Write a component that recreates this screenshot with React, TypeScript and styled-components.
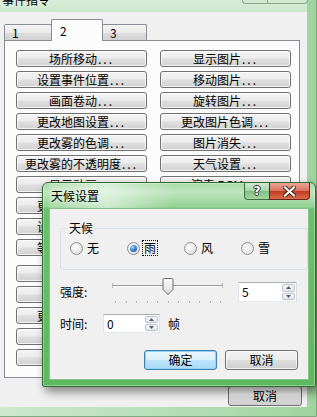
import React from "react";
import styled, { createGlobalStyle } from "styled-components";

const GlobalStyle = createGlobalStyle`
  html, body {
    margin: 0;
    padding: 0;
    overflow: hidden;
    background: #f0f0f0;
  }
  body {
    font-family: "Noto Sans CJK SC", "Liberation Sans", sans-serif;
    font-size: 12px;
    color: #000;
  }
  * {
    box-sizing: border-box;
  }
`;

const Page = styled.div`
  position: relative;
  width: 317px;
  height: 417px;
  overflow: hidden;
`;

/* ---------- background window (事件指令) ---------- */

const MainWindow = styled.div`
  display: flex;
  flex-direction: column;
  width: 325px;
  height: 431px;
  margin: -14px 0 0 -8px;
  padding: 0 9px 9px 7px;
  border: 1px solid #7fa97f;
  border-radius: 6px 6px 0 0;
  background: linear-gradient(90deg, #cde9cd, #b0dbb0 70%, #9fd39f);
`;

const TitleBar = styled.div<{ $active?: boolean }>`
  display: flex;
  align-items: flex-start;
  height: 25px;
  flex-shrink: 0;
  background: ${({ $active }) =>
    $active
      ? "linear-gradient(90deg, rgba(255,255,255,0.15) 0%, rgba(255,255,255,0.55) 22%, rgba(255,255,255,0) 48%)"
      : "linear-gradient(180deg, #e4f3e4, #d6ecd6 60%, #cbe7cb)"};
`;

const TitleText = styled.span<{ $indent: number }>`
  margin-top: 5px;
  padding-left: ${({ $indent }) => $indent}px;
  line-height: 16px;
  white-space: nowrap;
  text-shadow: 0 0 6px rgba(255, 255, 255, 0.9);
`;

const CaptionGroup = styled.div<{ $right: number }>`
  display: flex;
  margin-left: auto;
  margin-right: ${({ $right }) => $right}px;
`;

const CaptionButton = styled.div<{ $kind: "help" | "close"; $active?: boolean }>`
  display: flex;
  align-items: center;
  justify-content: center;
  width: ${({ $kind }) => ($kind === "help" ? 25 : 41)}px;
  height: 17px;
  border: 1px solid
    ${({ $kind, $active }) =>
      !$active ? "#8aa98a" : $kind === "help" ? "#3f6f3f" : "#6b2418"};
  border-top: none;
  ${({ $kind }) => ($kind === "help" ? "border-right: none;" : "")}
  border-radius: ${({ $kind }) => ($kind === "help" ? "0 0 0 4px" : "0 0 4px 0")};
  background: ${({ $kind, $active }) =>
    !$active
      ? "linear-gradient(180deg, #eef7ee, #d6ebd6 50%, #c4e2c4 51%, #d4ebd4)"
      : $kind === "help"
        ? "linear-gradient(180deg, #cfe9cf, #a6d3a6 50%, #80bf80 51%, #a3d6a3)"
        : "linear-gradient(180deg, #eaa596, #d9705a 50%, #c33a22 51%, #d96c4c)"};
  color: #fff;
  font-family: "DejaVu Sans", sans-serif;
  font-weight: bold;
  font-size: 12px;
  line-height: 14px;
  text-shadow:
    1px 0 0 #2c2c2c,
    -1px 0 0 #2c2c2c,
    0 1px 0 #2c2c2c,
    0 -1px 0 #2c2c2c;
`;

const Client = styled.div`
  flex: 1;
  display: flex;
  flex-direction: column;
  background: #f0f0f0;
  padding: 7px 0 0 4px;
`;

const TabStrip = styled.div`
  position: relative;
  z-index: 1;
  display: flex;
  align-items: flex-end;
  height: 21px;
`;

const Tab = styled.div<{ $active?: boolean; $width: number; $first?: boolean }>`
  position: relative;
  z-index: ${({ $active }) => ($active ? 2 : 1)};
  width: ${({ $width }) => $width}px;
  height: ${({ $active }) => ($active ? 22 : 16)}px;
  margin-left: ${({ $first }) => ($first ? 0 : -1)}px;
  margin-bottom: ${({ $active }) => ($active ? -1 : 0)}px;
  padding: ${({ $active }) => ($active ? "3px 0 0 8px" : "0 0 0 7px")};
  border: 1px solid #898c95;
  border-bottom: none;
  border-radius: 2px 2px 0 0;
  line-height: 15px;
  background: ${({ $active }) =>
    $active
      ? "#fcfcfc"
      : "linear-gradient(180deg, #f3f3f3, #ebebeb 50%, #dddddd 51%, #d2d2d2)"};
`;

const TabPanel = styled.div`
  width: 296px;
  height: 338px;
  padding: 9px 0 0 11px;
  border: 1px solid #898c95;
  background: #fcfcfc;
`;

const ButtonGrid = styled.div<{ $offset: number }>`
  display: grid;
  grid-template-columns: 131px 131px;
  grid-auto-rows: 17px;
  column-gap: 13px;
  row-gap: 4px;
  margin-top: ${({ $offset }) => $offset}px;
`;

const CommandButton = styled.div`
  height: 17px;
  border: 1px solid #707070;
  border-radius: 3px;
  background: linear-gradient(180deg, #f4f4f4, #ececec 45%, #dedede 55%, #d2d2d2);
  box-shadow: inset 0 0 0 1px rgba(255, 255, 255, 0.75);
  line-height: 15px;
  text-align: center;
  white-space: nowrap;
  overflow: hidden;
`;

const Dots = styled.span`
  letter-spacing: 2px;
  margin-left: 1px;
`;

const FooterButton = styled.div`
  align-self: flex-end;
  width: 74px;
  height: 20px;
  margin: 8px 5px 0 0;
  border: 1px solid #707070;
  border-radius: 3px;
  background: linear-gradient(180deg, #f2f2f2, #ebebeb 50%, #dddddd 51%, #cfcfcf);
  line-height: 18px;
  text-align: center;
`;

/* ---------- dialog (天候设置) ---------- */

const Dialog = styled.div`
  position: absolute;
  left: 42px;
  top: 182px;
  width: 274px;
  height: 205px;
  display: flex;
  flex-direction: column;
  padding: 0 6px 6px;
  border: 1px solid #2f6b2f;
  border-radius: 6px 6px 2px 2px;
  background: linear-gradient(
    180deg,
    #a6d9a6 0px,
    #bfe5bf 9px,
    #93d093 24px,
    #6cc06c 26px,
    #5bb95b 100%
  );
  box-shadow:
    inset 0 0 0 1px rgba(255, 255, 255, 0.35),
    3px 5px 10px rgba(0, 0, 0, 0.45);
`;

const DialogClient = styled.div`
  flex: 1;
  display: flex;
  flex-direction: column;
  border: 1px solid #8bc28b;
  background: #f0f0f0;
`;

const GroupBox = styled.fieldset`
  width: 241px;
  height: 50px;
  margin: 11px 0 0 10px;
  padding: 4px 9px 0;
  border: 1px solid #d5dfe5;
  border-radius: 3px;
`;

const GroupLegend = styled.legend`
  margin-left: -3px;
  padding: 0 2px;
  line-height: 16px;
`;

const RadioRow = styled.div`
  display: flex;
`;

const RadioItem = styled.label`
  display: flex;
  align-items: center;
  gap: 3px;
  width: 57px;
  height: 16px;
  line-height: 14px;
`;

const RadioDot = styled.span<{ $checked?: boolean }>`
  position: relative;
  width: 13px;
  height: 13px;
  flex-shrink: 0;
  border: 1px solid #8e8f8f;
  border-radius: 50%;
  background: radial-gradient(circle at 40% 40%, #ffffff, #e6e6e6 60%, #cfcfcf);
  &::after {
    content: "";
    display: ${({ $checked }) => ($checked ? "block" : "none")};
    position: absolute;
    left: 2px;
    top: 2px;
    width: 7px;
    height: 7px;
    border-radius: 50%;
    background: radial-gradient(circle at 35% 30%, #b9dcfb, #3a87d6 45%, #0d4f9c);
  }
`;

const RadioLabel = styled.span<{ $focused?: boolean }>`
  padding: 0 1px;
  outline: ${({ $focused }) => ($focused ? "1px dotted #000" : "none")};
  outline-offset: 0;
`;

const FieldRow = styled.div<{ $top: number; $align: string }>`
  display: flex;
  align-items: ${({ $align }) => $align};
  margin: ${({ $top }) => $top}px 0 0 10px;
`;

const FieldLabel = styled.span<{ $width: number; $padTop?: number }>`
  width: ${({ $width }) => $width}px;
  padding-top: ${({ $padTop }) => $padTop ?? 0}px;
  line-height: 16px;
`;

const SliderBox = styled.div`
  width: 118px;
  height: 28px;
`;

const SpinBox = styled.div<{ $width: number; $height: number; $gap?: number; $top?: number }>`
  display: flex;
  width: ${({ $width }) => $width}px;
  height: ${({ $height }) => $height}px;
  margin-left: ${({ $gap }) => $gap ?? 0}px;
  margin-top: ${({ $top }) => $top ?? 0}px;
  border: 1px solid #abadb3;
  border-color: #abadb3 #dbdfe6 #e3e9ef #e2e3ea;
  background: #fff;
`;

const SpinValue = styled.span`
  flex: 1;
  padding-left: 3px;
  line-height: 17px;
`;

const SpinArrows = styled.div`
  display: flex;
  flex-direction: column;
  gap: 1px;
  width: 13px;
  margin: 1px 1px 1px 0;
`;

const SpinArrow = styled.div`
  flex: 1;
  display: flex;
  align-items: center;
  justify-content: center;
  border: 1px solid #b8c3cf;
  border-radius: 2px;
  background: linear-gradient(180deg, #f6f8fa, #e3e8ee);
`;

const UnitText = styled.span`
  margin-left: 8px;
  line-height: 16px;
`;

const DialogButtons = styled.div`
  display: flex;
  justify-content: flex-end;
  gap: 8px;
  margin-top: 17px;
  padding-right: 10px;
`;

const PushButton = styled.div<{ $default?: boolean }>`
  width: 73px;
  height: 20px;
  border: 1px solid ${({ $default }) => ($default ? "#3c7fb1" : "#707070")};
  border-radius: 3px;
  background: ${({ $default }) =>
    $default
      ? "linear-gradient(180deg, #eaf6fd, #d9f0fc 50%, #bee6fd 51%, #a7d9f5)"
      : "linear-gradient(180deg, #f2f2f2, #ebebeb 50%, #dddddd 51%, #cfcfcf)"};
  box-shadow: ${({ $default }) =>
    $default ? "inset 0 0 0 1px #8fd3f5" : "inset 0 0 0 1px rgba(255,255,255,0.7)"};
  line-height: 18px;
  text-align: center;
`;

/* ---------- drawings ---------- */

function Arrow({ up }: { up?: boolean }) {
  return (
    <svg width="5" height="3" viewBox="0 0 5 3">
      <polygon points={up ? "0,3 5,3 2.5,0" : "0,0 5,0 2.5,3"} fill="#4d5a6a" />
    </svg>
  );
}

function CloseGlyph() {
  return (
    <svg width="13" height="11" viewBox="0 0 13 11">
      <path
        d="M2 1.5 L11 9.5 M11 1.5 L2 9.5"
        stroke="#3a1a14"
        strokeWidth="4"
        strokeLinecap="square"
      />
      <path
        d="M2 1.5 L11 9.5 M11 1.5 L2 9.5"
        stroke="#fff"
        strokeWidth="2.2"
        strokeLinecap="square"
      />
    </svg>
  );
}

function TrackBar({ value, max }: { value: number; max: number }) {
  const left = 7;
  const right = 112;
  const thumbX = left + ((right - left) * value) / max;
  const ticks = Array.from({ length: max + 1 }, (_, i) => left + ((right - left) * i) / max);
  return (
    <svg width="118" height="28" viewBox="0 0 118 28">
      <defs>
        <linearGradient id="thumbFill" x1="0" x2="0" y1="0" y2="1">
          <stop offset="0" stopColor="#fafafa" />
          <stop offset="0.5" stopColor="#ececec" />
          <stop offset="1" stopColor="#d4d4d4" />
        </linearGradient>
      </defs>
      <line x1="4" x2="115" y1="8.5" y2="8.5" stroke="#9a9a9a" />
      <line x1="4" x2="115" y1="9.5" y2="9.5" stroke="#ffffff" />
      <line x1="4.5" x2="4.5" y1="6" y2="11" stroke="#b8b8b8" />
      <line x1="114.5" x2="114.5" y1="6" y2="11" stroke="#b8b8b8" />
      {ticks.map((x) => (
        <rect key={x} x={Math.round(x)} y="24" width="1" height="2" fill="#b0b0b0" />
      ))}
      <path
        d={`M${thumbX - 5 + 0.5} 2.5 q0 -1 1 -1 h8 q1 0 1 1 v10 l-5 5 l-5 -5 z`}
        fill="url(#thumbFill)"
        stroke="#6f6f6f"
      />
    </svg>
  );
}

/* ---------- data ---------- */

const commandsTop: [string, string][] = [
  ["场所移动", "显示图片"],
  ["设置事件位置", "移动图片"],
  ["画面卷动", "旋转图片"],
  ["更改地图设置", "更改图片色调"],
  ["更改雾的色调", "图片消失"],
  ["更改雾的不透明度", "天气设置"],
  ["显示动画", "演奏 BGM"],
  ["更改透明状态", "淡出 BGM"],
  ["设置移动路线", "记忆 BGM / BGS"],
  ["等待移动结束", "还原 BGM / BGS"],
];

const commandsBottom: [string, string][] = [
  ["准备渐变", "演奏 BGS"],
  ["执行渐变", "淡出 BGS"],
  ["更改画面色调", "演奏 ME"],
  ["画面闪烁", "演奏 SE"],
  ["画面震动", "停止 SE"],
];

const weathers = ["无", "雨", "风", "雪"];

function Commands({ rows, offset }: { rows: [string, string][]; offset: number }) {
  return (
    <ButtonGrid $offset={offset}>
      {rows.flat().map((label) => (
        <CommandButton key={label}>
          {label}
          <Dots>...</Dots>
        </CommandButton>
      ))}
    </ButtonGrid>
  );
}

export default function App() {
  const selectedWeather = "雨";
  return (
    <Page>
      <GlobalStyle />
      <MainWindow>
        <TitleBar>
          <TitleText $indent={2}>事件指令</TitleText>
          <CaptionGroup $right={-1}>
            <CaptionButton $kind="help" />
            <CaptionButton $kind="close" />
          </CaptionGroup>
        </TitleBar>
        <Client>
          <TabStrip>
            <Tab $width={48} $first>
              1
            </Tab>
            <Tab $width={52} $active>
              2
            </Tab>
            <Tab $width={45}>3</Tab>
          </TabStrip>
          <TabPanel>
            <Commands rows={commandsTop} offset={0} />
            <Commands rows={commandsBottom} offset={9} />
          </TabPanel>
          <FooterButton>取消</FooterButton>
        </Client>
      </MainWindow>

      <Dialog>
        <TitleBar $active>
          <TitleText $indent={2}>天候设置</TitleText>
          <CaptionGroup $right={-1}>
            <CaptionButton $kind="help" $active>
              ?
            </CaptionButton>
            <CaptionButton $kind="close" $active>
              <CloseGlyph />
            </CaptionButton>
          </CaptionGroup>
        </TitleBar>
        <DialogClient>
          <GroupBox>
            <GroupLegend>天候</GroupLegend>
            <RadioRow>
              {weathers.map((w) => (
                <RadioItem key={w}>
                  <RadioDot $checked={w === selectedWeather} />
                  <RadioLabel $focused={w === selectedWeather}>{w}</RadioLabel>
                </RadioItem>
              ))}
            </RadioRow>
          </GroupBox>

          <FieldRow $top={7} $align="flex-start">
            <FieldLabel $width={48} $padTop={7}>
              强度:
            </FieldLabel>
            <SliderBox>
              <TrackBar value={5} max={10} />
            </SliderBox>
            <SpinBox $width={59} $height={20} $gap={12} $top={5}>
              <SpinValue>5</SpinValue>
              <SpinArrows>
                <SpinArrow>
                  <Arrow up />
                </SpinArrow>
                <SpinArrow>
                  <Arrow />
                </SpinArrow>
              </SpinArrows>
            </SpinBox>
          </FieldRow>

          <FieldRow $top={9} $align="center">
            <FieldLabel $width={43}>时间:</FieldLabel>
            <SpinBox $width={57} $height={19}>
              <SpinValue>0</SpinValue>
              <SpinArrows>
                <SpinArrow>
                  <Arrow up />
                </SpinArrow>
                <SpinArrow>
                  <Arrow />
                </SpinArrow>
              </SpinArrows>
            </SpinBox>
            <UnitText>帧</UnitText>
          </FieldRow>

          <DialogButtons>
            <PushButton $default>确定</PushButton>
            <PushButton>取消</PushButton>
          </DialogButtons>
        </DialogClient>
      </Dialog>
    </Page>
  );
}
